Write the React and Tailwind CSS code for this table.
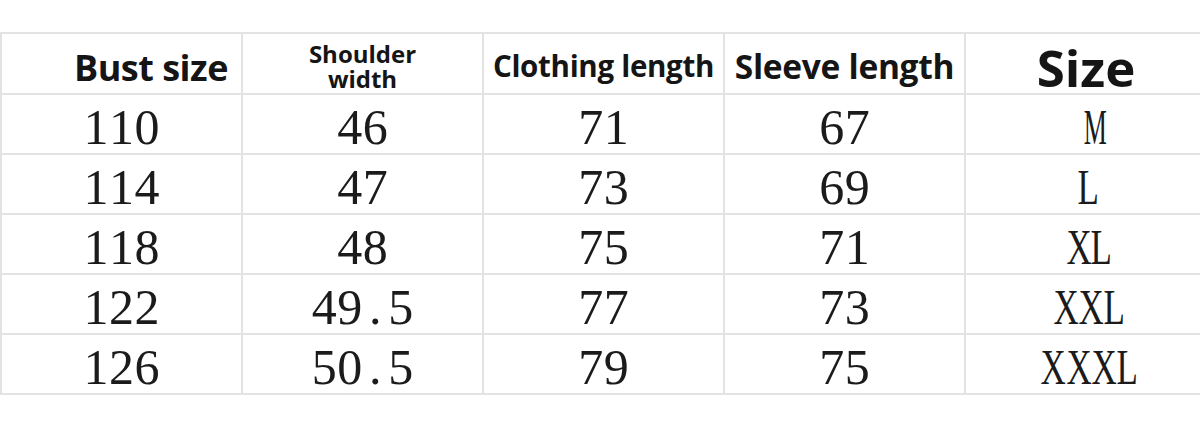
const HEAD = "font-['Open_Sans','Noto_Sans',sans-serif] font-bold text-[#151515]";

const ROWS = [
  ["110", "46", "71", "67", "M"],
  ["114", "47", "73", "69", "L"],
  ["118", "48", "75", "71", "XL"],
  ["122", "49.5", "77", "73", "XXL"],
  ["126", "50.5", "79", "75", "XXXL"],
];

// half-width serif cells, like the bitmap font in the chart
function Mono({ text }) {
  return (
    <span className="inline-flex font-['Liberation_Serif','Times_New_Roman',serif] text-[50px] leading-none text-[#1b1b1b]">
      {text.split("").map((c, i) => (
        <span key={i} className="inline-block w-[25.5px] text-center">
          <span className={`inline-block ${c === "M" ? "scale-x-[0.52]" : /[A-Z]/.test(c) ? "scale-x-[0.7]" : ""}`}>{c}</span>
        </span>
      ))}
    </span>
  );
}

export default function App() {
  return (
    <div className="w-[1200px] h-[439px] bg-white overflow-hidden pt-[32px]">
      <table className="table-fixed border-collapse w-[1206px]">
        <colgroup>
          <col className="w-[241px]" />
          <col className="w-[241px]" />
          <col className="w-[241px]" />
          <col className="w-[241px]" />
          <col className="w-[242px]" />
        </colgroup>
        <thead>
          <tr className="h-[61px]">
            <th className={`${HEAD} border-2 border-[#e3e3e3] text-[36px] text-left pl-[72px] pt-[8px] leading-none tracking-[-0.5px]`}>Bust size</th>
            <th className={`${HEAD} border-2 border-[#e3e3e3] text-[24px] leading-[23px] pt-[4px]`}>
              <div>Shoulder</div>
              <div className="mt-[2px]">width</div>
            </th>
            <th className={`${HEAD} border-2 border-[#e3e3e3] text-[29.5px] leading-none pt-[4px] tracking-[-0.3px] whitespace-nowrap`}>Clothing length</th>
            <th className={`${HEAD} border-2 border-[#e3e3e3] text-[33.5px] leading-none pt-[6px] tracking-[-0.3px] whitespace-nowrap`}>Sleeve length</th>
            <th className={`${HEAD} border-2 border-[#e3e3e3] text-[51px] leading-none pt-[8px] text-[#222]`}>Size</th>
          </tr>
        </thead>
        <tbody>
          {ROWS.map((r) => (
            <tr key={r[0]} className="h-[60px]">
              {r.map((v, i) => (
                <td key={i} className="border-2 border-[#e3e3e3] text-center pt-[6px]">
                  <Mono text={v} />
                </td>
              ))}
            </tr>
          ))}
        </tbody>
      </table>
    </div>
  );
}
